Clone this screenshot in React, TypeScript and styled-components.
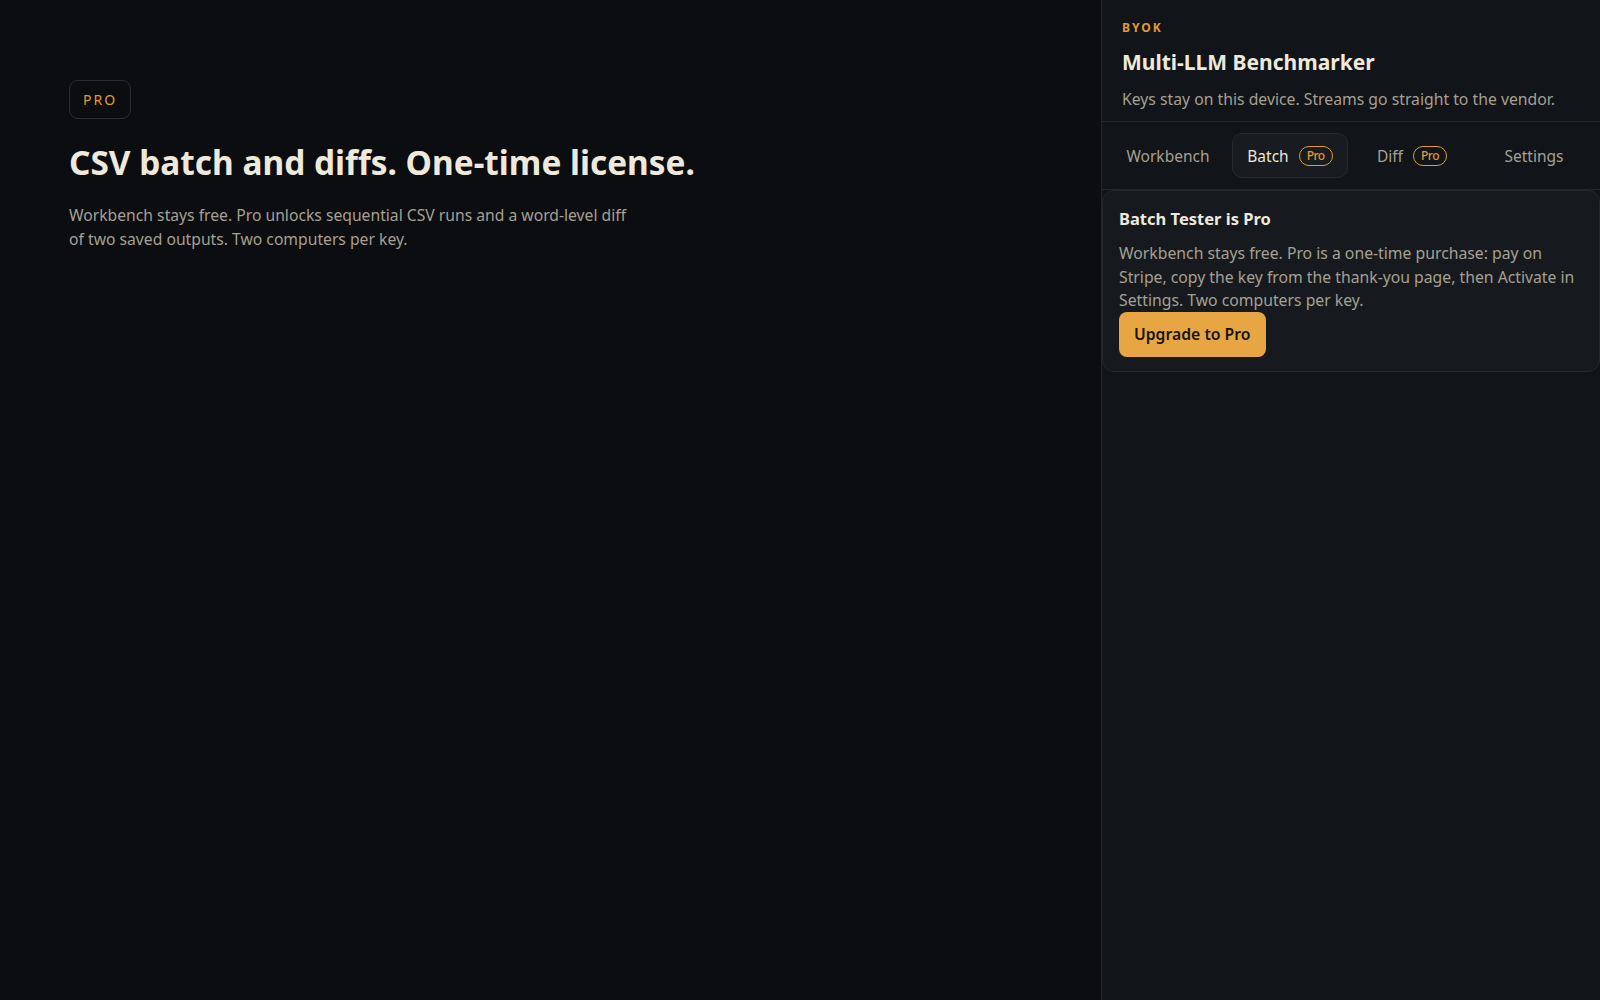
import React from "react";
import styled, { createGlobalStyle } from "styled-components";

const FONT = `"Noto Sans", "Open Sans", sans-serif`;

const GlobalStyle = createGlobalStyle`
  html, body {
    margin: 0;
    padding: 0;
    height: 100%;
    background: #0b0d10;
  }
  body {
    font-family: ${FONT};
    color: #ece6d8;
  }
  #root {
    height: 100%;
  }
  * {
    box-sizing: border-box;
  }
`;

const Shell = styled.div`
  display: grid;
  grid-template-columns: 1fr 499px;
  height: 100vh;
  background: #0b0d10;
`;

const Hero = styled.main`
  padding: 80px 69px;
`;

const Badge = styled.span`
  display: inline-flex;
  align-items: center;
  height: 39px;
  padding: 0 13px;
  border: 1px solid #2a2d33;
  border-radius: 9px;
  color: #e39a2e;
  font-size: 14px;
  letter-spacing: 2px;
`;

const Headline = styled.h1`
  margin: 23px 0 0;
  font-size: 33.4px;
  font-weight: 700;
  line-height: 1.2;
  color: #efe9dc;
`;

const Lead = styled.p`
  margin: 21px 0 0;
  max-width: 565px;
  font-size: 15.7px;
  line-height: 24px;
  color: #a6a093;
`;

const Sidebar = styled.aside`
  display: flex;
  flex-direction: column;
  background: #111418;
  border-left: 1px solid #24272c;
`;

const Header = styled.header`
  padding: 19px 20px 11px;
  border-bottom: 1px solid #24272c;
`;

const Eyebrow = styled.div`
  color: #e39a2e;
  font-size: 12px;
  font-weight: 700;
  letter-spacing: 2px;
`;

const Title = styled.h2`
  margin: 12px 0 0;
  font-size: 21px;
  font-weight: 700;
  color: #efe9dc;
`;

const Subtitle = styled.p`
  margin: 12px 0 0;
  font-size: 15.75px;
  color: #a6a093;
`;

const Tabs = styled.nav`
  display: grid;
  grid-template-columns: repeat(4, 1fr);
  gap: 6px;
  padding: 11px 8px 11px;
  border-bottom: 1px solid #24272c;
`;

const Tab = styled.button<{ $active?: boolean }>`
  display: flex;
  align-items: center;
  justify-content: center;
  gap: 10px;
  height: 45px;
  border-radius: 10px;
  border: 1px solid ${(p) => (p.$active ? "#262a30" : "transparent")};
  background: ${(p) => (p.$active ? "#181b20" : "transparent")};
  color: ${(p) => (p.$active ? "#ece6d8" : "#a6a093")};
  font-family: ${FONT};
  font-size: 15.5px;
  cursor: pointer;
`;

const ProPill = styled.span`
  display: inline-flex;
  align-items: center;
  justify-content: center;
  height: 20px;
  padding: 0 7px;
  border: 1.5px solid #e39a2e;
  border-radius: 10px;
  color: #e39a2e;
  font-size: 12px;
  font-weight: 500;
  letter-spacing: -0.5px;
`;

const Card = styled.section`
  padding: 16px 16px 14px;
  background: #161a1f;
  border: 1px solid #24282e;
  border-radius: 12px;
`;

const CardTitle = styled.h3`
  margin: 0;
  font-size: 16.5px;
  font-weight: 700;
  color: #efe9dc;
`;

const CardText = styled.p`
  margin: 12px 0 0;
  font-size: 15.75px;
  line-height: 23.5px;
  color: #a6a093;
`;

const UpgradeButton = styled.button`
  height: 45px;
  margin-top: -1px;
  padding: 0 15px;
  border: 0;
  border-radius: 8px;
  background: #e8a544;
  color: #17140f;
  font-family: ${FONT};
  font-size: 15.75px;
  font-weight: 600;
  cursor: pointer;
`;

const tabs = [
  { label: "Workbench" },
  { label: "Batch", pro: true, active: true },
  { label: "Diff", pro: true },
  { label: "Settings" },
];

export default function App() {
  return (
    <>
      <GlobalStyle />
      <Shell>
        <Hero>
          <Badge>PRO</Badge>
          <Headline>CSV batch and diffs. One-time license.</Headline>
          <Lead>
            Workbench stays free. Pro unlocks sequential CSV runs and a
            word-level diff of two saved outputs. Two computers per key.
          </Lead>
        </Hero>
        <Sidebar>
          <Header>
            <Eyebrow>BYOK</Eyebrow>
            <Title>Multi-LLM Benchmarker</Title>
            <Subtitle>Keys stay on this device. Streams go straight to the vendor.</Subtitle>
          </Header>
          <Tabs>
            {tabs.map((t) => (
              <Tab key={t.label} $active={t.active}>
                {t.label}
                {t.pro && <ProPill>Pro</ProPill>}
              </Tab>
            ))}
          </Tabs>
          <Card>
            <CardTitle>Batch Tester is Pro</CardTitle>
            <CardText>
              Workbench stays free. Pro is a one-time purchase: pay on Stripe,
              copy the key from the thank-you page, then Activate in Settings.
              Two computers per key.
            </CardText>
            <UpgradeButton>Upgrade to Pro</UpgradeButton>
          </Card>
        </Sidebar>
      </Shell>
    </>
  );
}
